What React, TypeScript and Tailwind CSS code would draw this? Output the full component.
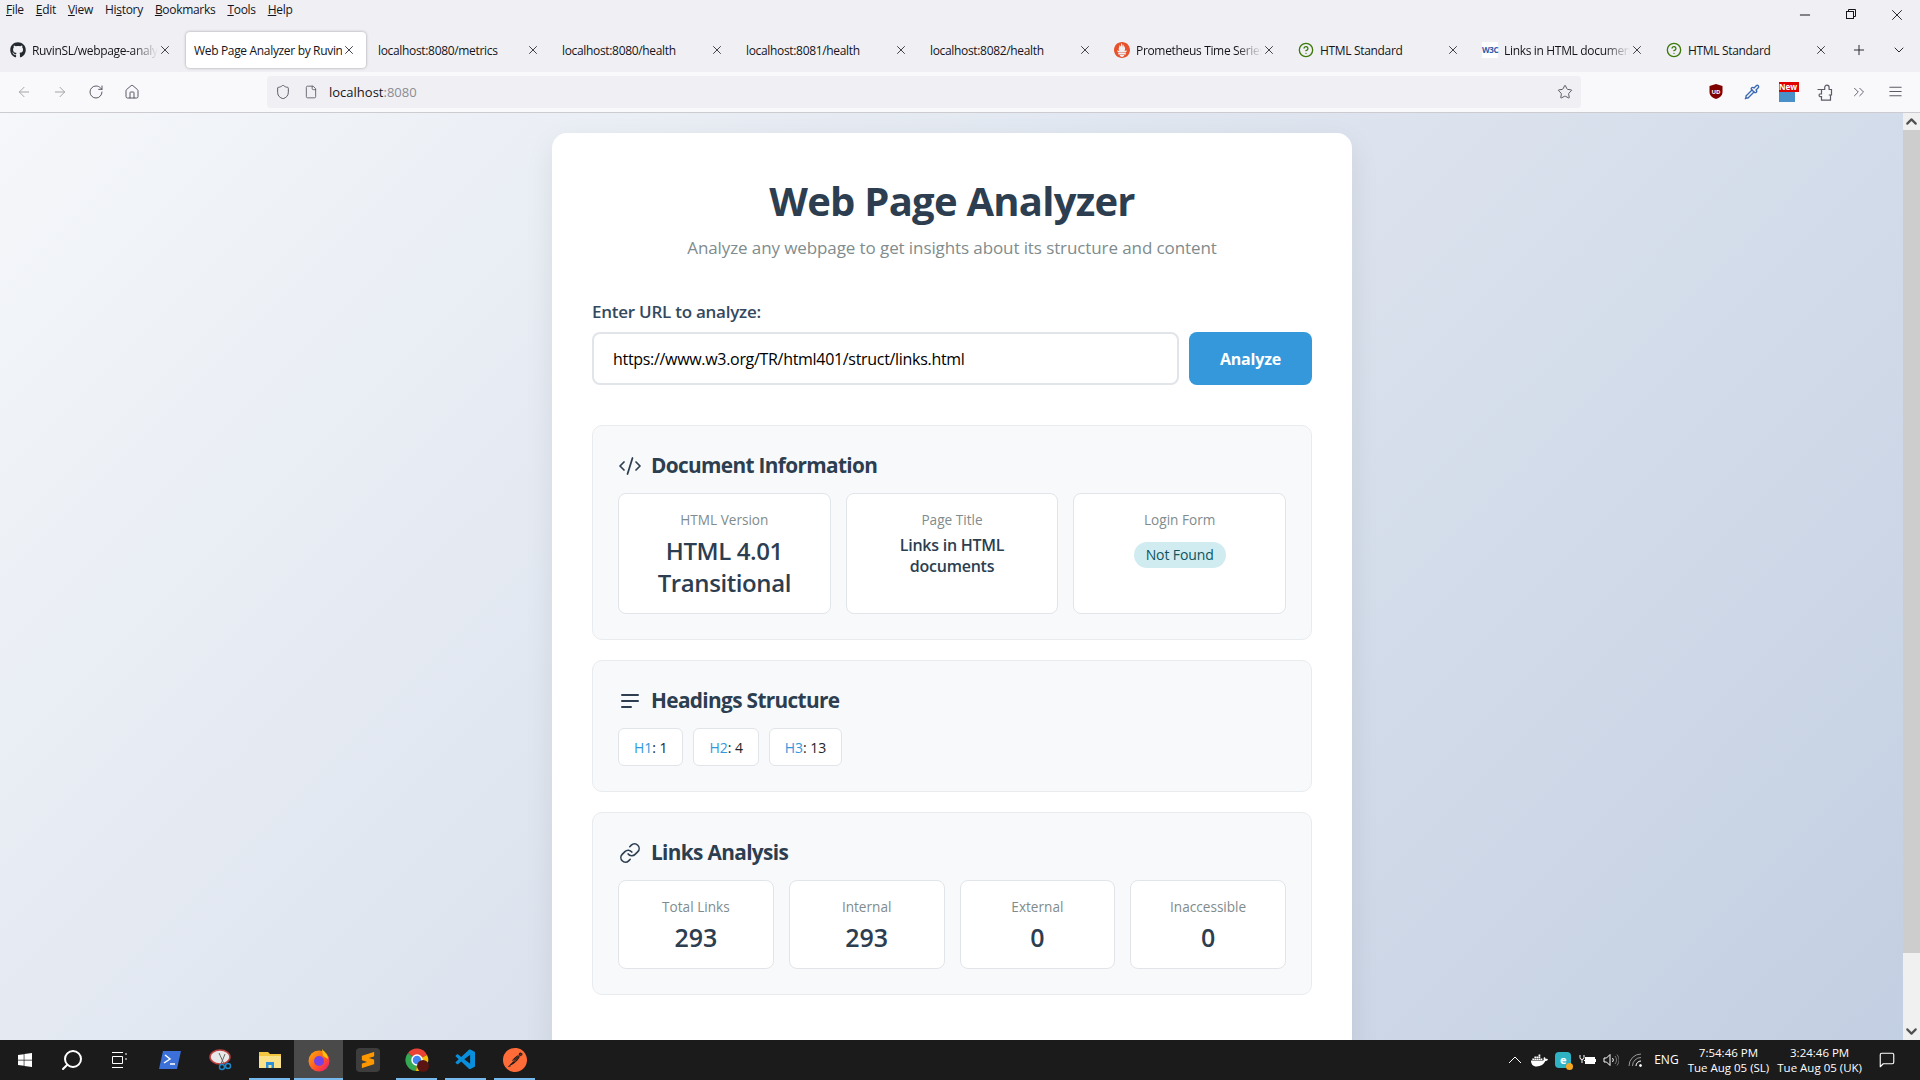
import React from 'react';
import { FaGithub, FaWindows, FaDocker } from 'react-icons/fa';
import { SiPrometheus, SiSublimetext, SiPostman } from 'react-icons/si';
import { VscVscode } from 'react-icons/vsc';
import { LuArrowLeft, LuArrowRight, LuRotateCw, LuHouse, LuShield, LuFile, LuStar, LuChevronsRight, LuMenu, LuX, LuPlus, LuChevronDown, LuChevronUp, LuMinus, LuSearch, LuCircleHelp, LuCodeXml, LuLink, LuPipette, LuMessageSquare } from 'react-icons/lu';

const menus: [string, string, string][] = [
  ['', 'F', 'ile'],
  ['', 'E', 'dit'],
  ['', 'V', 'iew'],
  ['Hi', 's', 'tory'],
  ['', 'B', 'ookmarks'],
  ['', 'T', 'ools'],
  ['', 'H', 'elp'],
];

const W3cIcon = () => (
  <span className="w-4 h-4 bg-white flex items-center justify-center text-[8px] font-bold text-[#2d5ca8] tracking-tighter">W3C</span>
);

const tabs: { title: string; icon?: React.ReactNode; fade?: boolean; active?: boolean }[] = [
  { title: 'RuvinSL/webpage-analyzer', icon: <FaGithub className="w-4 h-4 text-[#24292f]" />, fade: true },
  { title: 'Web Page Analyzer by Ruvin', active: true },
  { title: 'localhost:8080/metrics' },
  { title: 'localhost:8080/health' },
  { title: 'localhost:8081/health' },
  { title: 'localhost:8082/health' },
  { title: 'Prometheus Time Series', icon: <SiPrometheus className="w-4 h-4 text-[#e6522c]" />, fade: true },
  { title: 'HTML Standard', icon: <LuCircleHelp className="w-4 h-4 text-[#3c790a]" /> },
  { title: 'Links in HTML documents', icon: <W3cIcon />, fade: true },
  { title: 'HTML Standard', icon: <LuCircleHelp className="w-4 h-4 text-[#3c790a]" /> },
];

const Tab = ({ title, icon, fade, active }: (typeof tabs)[number]) => (
  <div className={`w-[180px] mx-[2px] h-9 flex items-center pl-2 pr-[10px] rounded ${active ? 'bg-white shadow-[0_0_3px_rgba(0,0,0,0.35)]' : ''}`}>
    {icon && <span className="w-4 h-4 mr-[6px] shrink-0 flex items-center justify-center">{icon}</span>}
    <span className={`flex-1 overflow-hidden whitespace-nowrap text-[12px] tracking-[-0.33px] pt-px text-[#15141a] ${fade ? 'mask-r-from-80%' : ''}`}>{title}</span>
    <LuX className="w-[14px] h-[14px] shrink-0 text-[#2b2a33]" strokeWidth={1.5} />
  </div>
);

const PageBackdrop = ({ children }: { children: React.ReactNode }) => (
  <div className="flex-1 overflow-hidden bg-linear-135 from-[#f5f7fa] to-[#c3cfe2] flex justify-center pt-5 pl-[1px]">{children}</div>
);

const Section = ({ icon, title, children }: { icon: React.ReactNode; title: string; children: React.ReactNode }) => (
  <section className="bg-[#f8f9fa] border border-[#e9ecef] rounded-[10px] px-[25px] pt-[24px] pb-[25px] mb-[20px]">
    <h3 className="flex items-center h-[32px] mb-[11px] text-[20.800px] font-bold tracking-[-0.65px] text-[#2c3e50]">
      <span className="w-[24px] flex justify-center mr-[9px]">{icon}</span>
      {title}
    </h3>
    {children}
  </section>
);

const InfoCard = ({ label, children }: { label: string; children: React.ReactNode }) => (
  <div className="bg-white border border-[#e1e5e9] rounded-lg text-center pt-[16px] px-4 h-[121px]">
    <div className="text-[13.600px] leading-[20px] text-[#7f8c8d] mb-[5px]">{label}</div>
    {children}
  </div>
);

const StatCard = ({ label, value }: { label: string; value: number }) => (
  <div className="bg-white border border-[#e1e5e9] rounded-lg text-center pt-[16px] h-[89px]">
    <div className="text-[13.600px] leading-[20px] text-[#7f8c8d]">{label}</div>
    <div className="text-[25px] leading-[32px] font-semibold text-[#2c3e50] mt-[4px]">{value}</div>
  </div>
);

const HeadingChip = ({ tag, count }: { tag: string; count: number }) => (
  <div className="bg-white border border-[#e1e5e9] rounded-md h-[38px] px-[15px] flex items-center text-[14px] tracking-[-0.05px] text-[#212529]">
    <span className="text-[#3498db] font-medium">{tag}</span>: {count}
  </div>
);

const TaskButton = ({ children, open, active }: { children: React.ReactNode; open?: boolean; active?: boolean }) => (
  <div className={`relative w-[49px] h-10 flex items-center justify-center ${active ? 'bg-[#4a4a4a]' : ''}`}>
    {children}
    {open && <span className={`absolute bottom-0 h-[2px] bg-[#76b9ed] ${active ? 'inset-x-0' : 'inset-x-1'}`} />}
  </div>
);

const Clock = ({ time, date }: { time: string; date: string }) => (
  <div className="text-center text-[11.500px] leading-[15px] text-white whitespace-nowrap">
    <div>{time}</div>
    <div>{date}</div>
  </div>
);

export default function App() {
  return (
    <div className="h-screen w-full flex flex-col overflow-hidden font-['Open_Sans',sans-serif] bg-[#f0f0f4]">
      {/* menu bar + window controls */}
      <div className="h-[30px] flex items-start shrink-0">
        <div className="flex gap-[12px] pl-[6px] pt-[1px] text-[12px] tracking-[-0.3px] leading-[18px] text-[#15141a]">
          {menus.map(([before, key, after]) => (
            <span key={before + key + after}>{before}<span className="underline">{key}</span>{after}</span>
          ))}
        </div>
        <div className="ml-auto flex items-center text-[#15141a] pt-[6px] pr-[12px] gap-[24px]">
          <LuMinus className="w-[22px] h-[16px]" strokeWidth={1.5} />
          <svg width="22" height="16" viewBox="0 0 22 16" fill="none" stroke="currentColor"><rect x="6.5" y="4.5" width="7" height="7" /><path d="M8.5 4.5v-2h7v7h-2" /></svg>
          <LuX className="w-[22px] h-[18px]" strokeWidth={1.2} />
        </div>
      </div>

      {/* tab strip */}
      <div className="h-[42px] flex items-start shrink-0 pt-[2px]">
        {tabs.map((t, i) => <Tab key={i} {...t} />)}
        <LuPlus className="w-4 h-4 ml-[11px] mt-[10px] text-[#2b2a33]" strokeWidth={1.5} />
        <LuChevronDown className="w-4 h-4 ml-[24px] mt-[10px] text-[#2b2a33]" strokeWidth={1.5} />
      </div>

      {/* toolbar */}
      <div className="h-[41px] bg-[#f9f9fb] border-b border-[#ccccd0] flex items-center shrink-0 text-[#5b5b66] pb-px">
        <div className="flex items-center gap-[20px] pl-4 w-[267px]">
          <LuArrowLeft className="w-4 h-4 text-[#a5a5ab]" strokeWidth={1.5} />
          <LuArrowRight className="w-4 h-4 text-[#a5a5ab]" strokeWidth={1.5} />
          <LuRotateCw className="w-4 h-4" strokeWidth={1.5} />
          <LuHouse className="w-4 h-4" strokeWidth={1.5} />
        </div>
        <div className="w-[1314px] h-8 bg-[#f0f0f4] rounded flex items-center pl-2 pr-2 text-[13px]">
          <LuShield className="w-4 h-4" strokeWidth={1.5} />
          <LuFile className="w-[14px] h-[14px] ml-[13px]" strokeWidth={1.5} />
          <span className="ml-[11px] pt-[2px] text-[#15141a]">localhost<span className="text-[#8b8b92]">:8080</span></span>
          <LuStar className="w-4 h-4 ml-auto" strokeWidth={1.5} />
        </div>
        <div className="flex items-center flex-1 pl-[127px]">
          <svg width="16" height="17" viewBox="0 0 16 17" className="shrink-0 mr-[20px]"><path d="M8 1l6.5 2v6c0 3.5-3 6-6.5 7-3.500-1-6.500-3.500-6.500-7V3z" fill="#800000" /><text x="8" y="10.500" textAnchor="middle" fontSize="6" fontWeight="700" fill="#fff">UD</text></svg>
          <LuPipette className="w-4 h-4 text-[#3a68b5] mr-[19px]" strokeWidth={2} />
          <div className="relative w-5 h-5 shrink-0 mr-[17px]">
            <div className="absolute left-0 bottom-0 w-4 h-3 bg-[#4a90c8]" />
            <div className="absolute left-0 top-0 w-5 h-[10px] bg-[#e00000] text-white text-[8px] leading-[10px] font-bold overflow-hidden">New</div>
          </div>
          <svg width="17" height="18" viewBox="0 0 17 18" fill="none" stroke="currentColor" strokeWidth="1.2" className="shrink-0 mr-[17px]"><path d="M1.500 6.500h4V11H3.800a1.500 1.500 0 0 0 0 2.600h1.700v3.500h9V12h-1.700M5.500 6.500h3.200V4.400a2.200 2.200 0 0 1 4.400 0v2.100h2.400v5.500H13" /></svg>
          <LuChevronsRight className="w-[18px] h-[18px] mr-[19px]" strokeWidth={1.25} />
          <LuMenu className="w-[17px] h-[17px]" strokeWidth={1.5} />
        </div>
      </div>

      {/* page */}
      <div className="flex-1 flex min-h-0">
        <PageBackdrop>
          <main className="w-[800px] shrink-0 self-start bg-white rounded-t-[15px] shadow-[0_10px_30px_rgba(0,0,0,0.08)] px-10 pt-[40px] pb-10">
            <h1 className="text-center text-[40px] leading-[56px] font-bold tracking-[-0.75px] text-[#2c3e50]">Web Page Analyzer</h1>
            <p className="text-center text-[17px] tracking-[-0.1px] leading-[24px] text-[#7f8c8d] mt-[7px]">Analyze any webpage to get insights about its structure and content</p>
            <label className="block mt-[40px] text-[17px] tracking-[-0.25px] leading-[24px] font-semibold text-[#34495e]">Enter URL to analyze:</label>
            <div className="flex gap-[10px] mt-[8px] mb-[40px]">
              <input readOnly value="https://www.w3.org/TR/html401/struct/links.html" className="flex-1 min-w-0 h-[53px] rounded-lg border-2 border-[#e1e5e9] px-[19px] text-[16px] tracking-[-0.31px] text-black outline-none bg-white" />
              <button className="w-[123px] h-[53px] rounded-lg bg-[#3498db] text-white text-[16px] font-bold tracking-[-0.2px]">Analyze</button>
            </div>

            <Section icon={<LuCodeXml className="w-6 h-6 text-[#2c3e50]" strokeWidth={1.75} />} title="Document Information">
              <div className="grid grid-cols-3 gap-[15px]">
                <InfoCard label="HTML Version">
                  <div className="text-[24px] leading-[32px] font-semibold tracking-[-0.4px] text-[#2c3e50]">HTML 4.01 Transitional</div>
                </InfoCard>
                <InfoCard label="Page Title">
                  <div className="text-[16px] leading-[21px] font-semibold tracking-[-0.25px] text-[#2c3e50]">Links in HTML documents</div>
                </InfoCard>
                <InfoCard label="Login Form">
                  <span className="inline-block mt-[7px] bg-[#d1ecf1] text-[#0c5460] text-[14px] leading-[26px] font-medium tracking-[-0.1px] rounded-full px-3">Not Found</span>
                </InfoCard>
              </div>
            </Section>

            <Section
              icon={
                <svg width="24" height="24" viewBox="0 0 24 24" fill="none" stroke="#2c3e50" strokeWidth="2" strokeLinecap="round"><path d="M4 6h16M4 12h16M4 18h9" /></svg>
              }
              title="Headings Structure"
            >
              <div className="flex gap-[10px]">
                <HeadingChip tag="H1" count={1} />
                <HeadingChip tag="H2" count={4} />
                <HeadingChip tag="H3" count={13} />
              </div>
            </Section>

            <Section icon={<LuLink className="w-[22px] h-[22px] text-[#2c3e50]" strokeWidth={1.75} />} title="Links Analysis">
              <div className="grid grid-cols-4 gap-[15px]">
                <StatCard label="Total Links" value={293} />
                <StatCard label="Internal" value={293} />
                <StatCard label="External" value={0} />
                <StatCard label="Inaccessible" value={0} />
              </div>
            </Section>
          </main>
        </PageBackdrop>
        {/* scrollbar */}
        <div className="w-[17px] shrink-0 bg-[#f0f0f0] flex flex-col items-center text-[#505050]">
          <LuChevronUp className="w-[17px] h-[17px]" strokeWidth={3} />
          <div className="w-full h-[823px] bg-[#cdcdcd]" />
          <div className="flex-1" />
          <LuChevronDown className="w-[17px] h-[17px]" strokeWidth={3} />
        </div>
      </div>

      {/* taskbar */}
      <div className="h-10 bg-[#1b1b1b] flex items-center shrink-0">
        <TaskButton><FaWindows className="w-4 h-4 text-white" /></TaskButton>
        <TaskButton><LuSearch className="w-[24px] h-[24px] mr-[3px] text-white -scale-x-100" strokeWidth={2} /></TaskButton>
        <TaskButton>
          <svg width="16" height="16" viewBox="0 0 16 16" fill="none" stroke="#fff" className="mr-[6px]"><path d="M0 .5h11M0 15.500h11M.5 4.500h10v7H.5zM14 1v2M14 6v2" /></svg>
        </TaskButton>
        <TaskButton>
          <svg width="24" height="20" viewBox="0 0 24 20" className="mr-[3px]"><path d="M5 1h18l-4 18H1z" fill="#3a70d8" /><path d="M7 5l5 4-6 4M12 14h5" stroke="#fff" strokeWidth="1.5" fill="none" /></svg>
        </TaskButton>
        <TaskButton>
          <svg width="24" height="24" viewBox="0 0 24 24"><ellipse cx="11" cy="9" rx="10" ry="7" fill="#e8e8e8" stroke="#c04040" strokeWidth="1.500" /><path d="M10 5l5 11M16 6l-4 10" stroke="#666" /><circle cx="13" cy="19" r="2.500" fill="none" stroke="#1e88c8" strokeWidth="1.500" /><circle cx="19" cy="18" r="2.500" fill="none" stroke="#1e88c8" strokeWidth="1.500" /></svg>
        </TaskButton>
        <TaskButton open>
          <svg width="22" height="20" viewBox="0 0 22 20"><path d="M0 2h9l2 2h11v14H0z" fill="#f3c63f" /><path d="M0 6h22v12H0z" fill="#fbe08a" /><path d="M7 18v-6h8v6h-2.500v-3h-3v3z" fill="#2a8fd8" /></svg>
        </TaskButton>
        <TaskButton open active>
          <svg width="24" height="24" viewBox="0 0 24 24"><defs><linearGradient id="fx" x1="0" y1="0" x2="1" y2="1"><stop offset="0" stopColor="#ffb000" /><stop offset="0.6" stopColor="#ff4f2a" /><stop offset="1" stopColor="#e31587" /></linearGradient></defs><circle cx="12" cy="13" r="10.500" fill="url(#fx)" /><path d="M15 1c3 3 6 6 6 10l-5-3z" fill="#ffc20a" /><circle cx="12" cy="13" r="5" fill="#7542e5" /></svg>
        </TaskButton>
        <TaskButton>
          <div className="w-6 h-6 bg-[#3d3d3d] rounded-sm flex items-center justify-center"><SiSublimetext className="w-4 h-4 text-[#ff9800]" /></div>
        </TaskButton>
        <TaskButton open>
          <svg width="24" height="24" viewBox="0 0 24 24"><path d="M12 12L3 5a11 11 0 0 1 19 2z" fill="#ea4335" /><path d="M12 12l10-5a11 11 0 0 1-11 16z" fill="#fbbc05" /><path d="M12 12L11 23A11 11 0 0 1 3 5z" fill="#34a853" /><circle cx="12" cy="12" r="5" fill="#4285f4" stroke="#fff" strokeWidth="1.500" /><circle cx="18" cy="18" r="6" fill="#5a1512" /></svg>
        </TaskButton>
        <TaskButton open><VscVscode className="w-6 h-6 text-[#0a8fdc]" /></TaskButton>
        <TaskButton open><SiPostman className="w-6 h-6 text-[#ff6c37]" /></TaskButton>

        <div className="ml-auto flex items-center text-white">
          <svg width="14" height="8" viewBox="0 0 14 8" fill="none" stroke="#fff" className="mr-[9px]"><path d="M1 7l6-6 6 6" /></svg>
          <FaDocker className="w-[17px] h-[17px] mr-[7px]" />
          <div className="relative w-4 h-4 rounded bg-[#2fb3c4] text-[11px] leading-4 text-center font-bold mr-[8px]">
            e
            <span className="absolute -right-[2px] -bottom-[2px] w-[7px] h-[7px] rounded-full bg-[#f5a623]" />
          </div>
          <svg width="17" height="12" viewBox="0 0 17 12" fill="none" stroke="#fff" className="mr-[7px]"><path d="M1 1v2.500a2 2 0 0 0 4 0V1M3 5.500V9M5 6.500h1" /><rect x="6.500" y="3.500" width="9" height="6" fill="#fff" /><path d="M16.500 5v3" /></svg>
          <svg width="16" height="14" viewBox="0 0 16 14" fill="none" stroke="#fff" className="mr-[9px]"><path d="M1 5h2.500L7 1.500v11L3.500 9H1zM9.500 5a3 3 0 0 1 0 4" /><path d="M12 3a6 6 0 0 1 0 8M14 1.500a9 9 0 0 1 0 11" stroke="#777" /></svg>
          <svg width="16" height="14" viewBox="0 0 16 14" fill="none" stroke="#fff" className="mr-[10px]"><path d="M1 13A12 12 0 0 1 13 1M4.500 13A8.500 8.500 0 0 1 13 4.500" stroke="#999" /><path d="M8 13a5 5 0 0 1 5-5" /><circle cx="12.500" cy="12.500" r="1" fill="#fff" /></svg>
          <span className="text-[12px] mr-[9px]">ENG</span>
          <Clock time="7:54:46 PM" date="Tue Aug 05 (SL)" />
          <div className="w-[8px]" />
          <Clock time="3:24:46 PM" date="Tue Aug 05 (UK)" />
          <LuMessageSquare className="w-[18px] h-[18px] ml-[16px] mr-[24px]" strokeWidth={1.5} />
        </div>
      </div>
    </div>
  );
}
